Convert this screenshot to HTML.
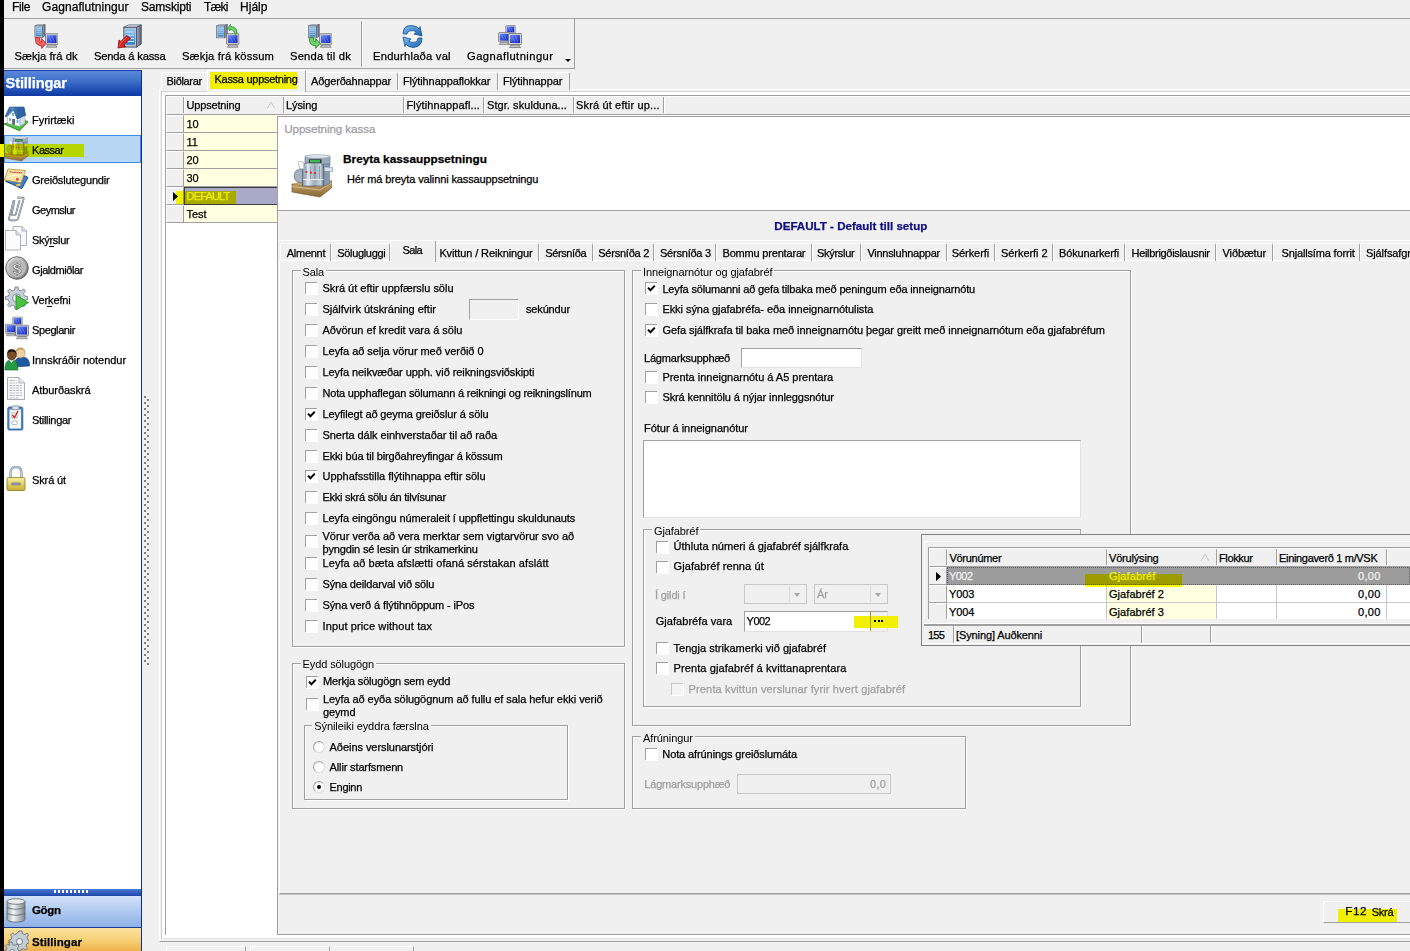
<!DOCTYPE html>
<html><head><meta charset="utf-8">
<style>
*{box-sizing:border-box}
html,body{margin:0;padding:0}
body{width:1410px;height:951px;overflow:hidden;position:relative;background:#f0f0f0;font-family:"Liberation Sans",sans-serif;font-size:11px;color:#000;letter-spacing:-0.1px}
.a{position:absolute}
.t{position:absolute;white-space:nowrap;-webkit-text-stroke:0.25px currentColor}
.cb{position:absolute;width:12px;height:12px;border-top:1px solid #a0a0a0;border-left:1px solid #a0a0a0;background:#fff;box-shadow:1px 1px 0 #fff}
.cb svg{position:absolute;left:0;top:0}
.cb.dis{border-color:#c8c8c8;background:#f4f4f4}
.rb{position:absolute;width:12px;height:12px;border:1px solid #dcdcdc;border-top-color:#a4a4a4;border-left-color:#a4a4a4;border-radius:50%;background:radial-gradient(circle at 60% 60%,#fff 40%,#ececec)}
.rb.on::after{content:"";position:absolute;left:3px;top:3px;width:4px;height:4px;border-radius:50%;background:#000}
.grp{position:absolute;border:1px solid #a0a0a0;box-shadow:1px 1px 0 #fff, inset 1px 1px 0 #fff}
.gt{position:absolute;background:#f0f0f0;padding:0 2px;white-space:nowrap}
.inp{position:absolute;background:#fff;border:1px solid #e2e2e2;border-top-color:#a0a0a0;border-left-color:#a0a0a0}
</style></head>
<body>

<svg width="0" height="0" style="position:absolute">
<defs>
<linearGradient id="gScr" x1="0" y1="0" x2="1" y2="1"><stop offset="0" stop-color="#6a8cff"/><stop offset="1" stop-color="#0a1cb8"/></linearGradient>
<linearGradient id="gSrvF" x1="0" y1="0" x2="0" y2="1"><stop offset="0" stop-color="#8ac4f0"/><stop offset="1" stop-color="#2f7cc8"/></linearGradient>
<linearGradient id="gSrvS" x1="0" y1="0" x2="1" y2="0"><stop offset="0" stop-color="#a0aab8"/><stop offset="1" stop-color="#56627a"/></linearGradient>
<linearGradient id="gCoin" x1="0" y1="0" x2="1" y2="1"><stop offset="0" stop-color="#f4f4f4"/><stop offset="0.45" stop-color="#b4b4b4"/><stop offset="1" stop-color="#6a6a6a"/></linearGradient>
<linearGradient id="gLock" x1="0" y1="0" x2="0" y2="1"><stop offset="0" stop-color="#f8f0a0"/><stop offset="1" stop-color="#c8b030"/></linearGradient>
<linearGradient id="gDb" x1="0" y1="0" x2="1" y2="0"><stop offset="0" stop-color="#9aa4ac"/><stop offset="0.35" stop-color="#f4f6f8"/><stop offset="1" stop-color="#7c868e"/></linearGradient>
<linearGradient id="gBlueArr" x1="0" y1="0" x2="1" y2="1"><stop offset="0" stop-color="#7cc0f0"/><stop offset="1" stop-color="#1a60b0"/></linearGradient>
<linearGradient id="gReg" x1="0" y1="0" x2="1" y2="0"><stop offset="0" stop-color="#c8ccd4"/><stop offset="0.4" stop-color="#f0f2f4"/><stop offset="1" stop-color="#6a7280"/></linearGradient>
<symbol id="srv" viewBox="0 0 12 15">
 <path d="M0.5 2 L3.5 0.5 L11.5 0.5 L8.5 2 Z" fill="#e4eaf0" stroke="#6a7484" stroke-width="0.6"/>
 <path d="M8.5 2 L11.5 0.5 L11.5 12.5 L8.5 14.5 Z" fill="url(#gSrvS)" stroke="#4a5468" stroke-width="0.6"/>
 <rect x="0.5" y="2" width="8" height="12.5" fill="#b8c4d0" stroke="#4a5468" stroke-width="0.6"/>
 <rect x="1.5" y="3" width="6" height="10" fill="url(#gSrvF)"/>
 <path d="M2 5h5M2 7h5M2 9h5M2 11h5" stroke="#d8ecfc" stroke-width="0.6"/>
</symbol>
<symbol id="mon" viewBox="0 0 14 15">
 <rect x="0.5" y="0.5" width="13" height="11" rx="1" fill="#d4d4d4" stroke="#6c6c6c" stroke-width="0.8"/>
 <rect x="2" y="2" width="10" height="8" fill="url(#gScr)"/>
 <path d="M4 3 L7 9 M7 3 L10 9" stroke="#8aa0ff" stroke-width="0.7" opacity="0.7"/>
 <path d="M3 12 L11 12 L12.5 14.5 L1.5 14.5 Z" fill="#c4c4c4" stroke="#6c6c6c" stroke-width="0.7"/>
</symbol>
<symbol id="regS" viewBox="0 0 24 24">
 <path d="M3 17 L12 21 L23 16 L23 19 L12 24 L3 20 Z" fill="#7a5a2a"/>
 <path d="M3 17 L14 12 L23 16 L12 21 Z" fill="#b08850"/>
 <rect x="5" y="6" width="15" height="11" rx="2" fill="url(#gReg)" stroke="#50565e" stroke-width="0.8"/>
 <rect x="8" y="1.5" width="10" height="5" fill="#9aa0a8" stroke="#50565e" stroke-width="0.8"/>
 <rect x="10" y="3" width="6" height="2" fill="#3a9a4a"/>
 <circle cx="9" cy="12" r="1" fill="#d03030"/><circle cx="12" cy="13" r="1" fill="#d03030"/><circle cx="15" cy="12" r="1" fill="#d03030"/>
 <path d="M20 9 h3 v3 h-3" fill="#d0d4d8" stroke="#50565e" stroke-width="0.6"/>
</symbol>
<symbol id="reg" viewBox="0 0 52 52"><defs><linearGradient id="gMetal" x1="0" y1="0" x2="1" y2="0"><stop offset="0" stop-color="#7e90a4"/><stop offset="0.25" stop-color="#e4eaf0"/><stop offset="0.55" stop-color="#9cacbc"/><stop offset="0.85" stop-color="#c8d2dc"/><stop offset="1" stop-color="#6c7c90"/></linearGradient><linearGradient id="gWood" x1="0" y1="0" x2="0" y2="1"><stop offset="0" stop-color="#c8a870"/><stop offset="1" stop-color="#8a6834"/></linearGradient></defs><path d="M6 34 L36 37 L45.5 30.5 L45.5 38 L34 47 L6 42 Z" fill="url(#gWood)" stroke="#6a4c20" stroke-width="0.6"/><path d="M6 36.5 L34 40 L45.5 33" fill="none" stroke="#e0c898" stroke-width="0.8"/><path d="M6 34 L16 31 L45.5 30.5 L36 37 Z" fill="#c8a468"/><rect x="19" y="6" width="25" height="10" rx="1" fill="#9aaabb" stroke="#5a6a7c" stroke-width="0.6"/><ellipse cx="31.5" cy="6.5" rx="12.5" ry="1.8" fill="#dfe6ec" stroke="#7a8a9c" stroke-width="0.5"/><rect x="23" y="9.3" width="12.5" height="3.8" fill="#2a3a30"/><rect x="24" y="10" width="10" height="2.5" fill="#3ab850"/><path d="M37.5 14 L43.5 14 L43.5 34 L37.5 36 Z" fill="#8a9aae" stroke="#5a6a7c" stroke-width="0.5"/><path d="M38 17 L46.5 17.5 L46.5 21.5 L38 21.5 Z" fill="#d8e0e8" stroke="#6a7a8c" stroke-width="0.5"/><path d="M16.5 36 L16.5 18 Q17 13 22 13 L33 13 Q37.5 13 37.8 18 L37.8 36 Z" fill="url(#gMetal)" stroke="#4e5e70" stroke-width="0.7"/><path d="M20 16 L20 29 M24.5 16 L24.5 29 M29 16 L29 29 M33.5 16 L33.5 29" stroke="#6a7a8e" stroke-width="0.6"/><path d="M17 29.5 L37.5 29.5" stroke="#eef2f6" stroke-width="1"/><circle cx="20.5" cy="22" r="1.1" fill="#d03a30"/><circle cx="25" cy="22.7" r="1.1" fill="#d03a30"/><circle cx="29" cy="23.2" r="1.1" fill="#d03a30"/><path d="M16.5 19 Q8 19 8.2 26 Q8.5 33 16.5 33 Z" fill="#a4b2c2" stroke="#4e5e70" stroke-width="0.6"/><path d="M12 12 Q14 10.5 17.5 12 L18 19 L13.5 18.5 Z" fill="#f4f6f8" stroke="#8a98a8" stroke-width="0.5"/></symbol>
<symbol id="mon3" viewBox="0 0 24 23">
 <use href="#mon" x="7" y="0" width="11" height="11"/>
 <use href="#mon" x="0" y="7" width="12" height="13"/>
 <use href="#mon" x="10" y="8" width="14" height="15"/>
</symbol>
</defs></svg>
<div class="a" style="left:0px;top:0px;width:4px;height:951px;background:#000"></div>
<div class="t" style="left:12px;top:0.84px;font-size:12px;line-height:12px;font-weight:400;color:#000;letter-spacing:-0.336px;">File</div>
<div class="t" style="left:42px;top:0.84px;font-size:12px;line-height:12px;font-weight:400;color:#000;letter-spacing:0.073px;">Gagnaflutningur</div>
<div class="t" style="left:141px;top:0.84px;font-size:12px;line-height:12px;font-weight:400;color:#000;letter-spacing:-0.191px;">Samskipti</div>
<div class="t" style="left:204px;top:0.84px;font-size:12px;line-height:12px;font-weight:400;color:#000;letter-spacing:-0.718px;">Tæki</div>
<div class="t" style="left:240px;top:0.84px;font-size:12px;line-height:12px;font-weight:400;color:#000;letter-spacing:0.028px;">Hjálp</div>
<div class="a" style="left:4px;top:18px;width:1406px;height:1px;background:#a0a0a0"></div>
<div class="a" style="left:4px;top:19px;width:571px;height:50px;border-right:1px solid #a0a0a0;border-bottom:1px solid #a0a0a0"></div>
<div class="a" style="left:361px;top:21px;width:1px;height:46px;background:#a0a0a0"></div>
<div class="a" style="left:362px;top:21px;width:1px;height:46px;background:#fff"></div>
<div class="t" style="left:14.5px;top:51.02px;font-size:11.2px;line-height:11.2px;font-weight:400;color:#000;letter-spacing:0.024px;">Sækja frá dk</div>
<div class="t" style="left:94px;top:51.02px;font-size:11.2px;line-height:11.2px;font-weight:400;color:#000;letter-spacing:-0.194px;">Senda á kassa</div>
<div class="t" style="left:182px;top:51.02px;font-size:11.2px;line-height:11.2px;font-weight:400;color:#000;letter-spacing:0.154px;">Sækja frá kössum</div>
<div class="t" style="left:290px;top:51.02px;font-size:11.2px;line-height:11.2px;font-weight:400;color:#000;letter-spacing:0.211px;">Senda til dk</div>
<div class="t" style="left:373px;top:51.02px;font-size:11.2px;line-height:11.2px;font-weight:400;color:#000;letter-spacing:0.226px;">Endurhlaða val</div>
<div class="t" style="left:467px;top:51.02px;font-size:11.2px;line-height:11.2px;font-weight:400;color:#000;letter-spacing:0.458px;">Gagnaflutningur</div>
<div class="a" style="left:565px;top:59px;width:0;height:0;border-left:3px solid transparent;border-right:3px solid transparent;border-top:3px solid #000"></div>
<div class="a" style="left:4px;top:70px;width:138px;height:26px;background:linear-gradient(#5a88da,#4274cc 35%,#2454b8 70%,#0d3aa2);border-top:1px solid #1a3ea8;border-right:1px solid #0c2c9a"></div>
<div class="t" style="left:5.5px;top:75.64px;font-size:14.6px;line-height:14.6px;font-weight:700;color:#fff;">Stillingar</div>
<div class="a" style="left:4px;top:96px;width:138px;height:793px;background:#fff;border-right:1px solid #0c2c9a"></div>
<div class="a" style="left:4px;top:135px;width:137px;height:28px;background:#b6d6f4;border:1px solid #3d8ee6"></div>
<div class="t" style="left:32px;top:114.69px;font-size:11px;line-height:11px;font-weight:400;color:#000;letter-spacing:-0.042px;">Fyrirtæki</div>
<div class="t" style="left:32px;top:144.69px;font-size:11px;line-height:11px;font-weight:400;color:#000;letter-spacing:-0.458px;">Kassar</div>
<div class="t" style="left:32px;top:174.69px;font-size:11px;line-height:11px;font-weight:400;color:#000;letter-spacing:-0.207px;">Greiðslutegundir</div>
<div class="t" style="left:32px;top:204.69px;font-size:11px;line-height:11px;font-weight:400;color:#000;letter-spacing:-0.508px;">Geymslur</div>
<div class="t" style="left:32px;top:234.69px;font-size:11px;line-height:11px;font-weight:400;color:#000;letter-spacing:-0.292px;">Skýrslur</div>
<div class="t" style="left:32px;top:264.69px;font-size:11px;line-height:11px;font-weight:400;color:#000;letter-spacing:-0.422px;">Gjaldmiðlar</div>
<div class="t" style="left:32px;top:294.69px;font-size:11px;line-height:11px;font-weight:400;color:#000;letter-spacing:-0.144px;">Verkefni</div>
<div class="t" style="left:32px;top:324.69px;font-size:11px;line-height:11px;font-weight:400;color:#000;letter-spacing:-0.398px;">Speglanir</div>
<div class="t" style="left:32px;top:354.69px;font-size:11px;line-height:11px;font-weight:400;color:#000;letter-spacing:-0.041px;">Innskráðir notendur</div>
<div class="t" style="left:32px;top:384.69px;font-size:11px;line-height:11px;font-weight:400;color:#000;letter-spacing:-0.074px;">Atburðaskrá</div>
<div class="t" style="left:32px;top:414.69px;font-size:11px;line-height:11px;font-weight:400;color:#000;letter-spacing:-0.299px;">Stillingar</div>
<div class="t" style="left:32px;top:474.69px;font-size:11px;line-height:11px;font-weight:400;color:#000;letter-spacing:-0.123px;">Skrá út</div>
<div class="a" style="left:49px;top:246px;width:5px;height:1px;background:#000"></div>
<div class="a" style="left:47px;top:306px;width:5px;height:1px;background:#000"></div>
<div class="a" style="left:144px;top:396px;width:2px;height:270px;background-image:linear-gradient(#808080 2px,transparent 2px);background-size:2px 6px"></div>
<div class="a" style="left:147px;top:399px;width:2px;height:267px;background-image:linear-gradient(#808080 2px,transparent 2px);background-size:2px 6px"></div>
<div class="a" style="left:4px;top:889px;width:138px;height:7px;background:linear-gradient(#4a78d4,#1c46a8);border-right:1px solid #0c2c9a"></div>
<div class="a" style="left:54px;top:890px;width:36px;height:3px;background-image:linear-gradient(90deg,#fff 2px,transparent 2px);background-size:4px 3px"></div>
<div class="a" style="left:4px;top:896px;width:138px;height:32px;background:linear-gradient(#d2e2f8,#a8c4ee 60%,#8eb0e6);border-right:1px solid #0c2c9a;border-bottom:1px solid #1a3a98"></div>
<div class="t" style="left:32px;top:905.27px;font-size:11.5px;line-height:11.5px;font-weight:700;color:#000;letter-spacing:-0.333px;">Gögn</div>
<div class="a" style="left:4px;top:928px;width:138px;height:23px;background:linear-gradient(#fbe39e,#f6cd70 60%,#efb04a);border-right:1px solid #0c2c9a"></div>
<div class="t" style="left:32px;top:937.27px;font-size:11.5px;line-height:11.5px;font-weight:700;color:#000;letter-spacing:0.080px;">Stillingar</div>
<div class="a" style="left:159px;top:89px;width:1251px;height:853px;border-top:1px solid #fff;border-left:1px solid #fff;border-bottom:1px solid #a0a0a0"></div>
<div class="a" style="left:161px;top:91px;width:1249px;height:848px;background:#fff;border-top:1px solid #d4d4d4;border-left:1px solid #d4d4d4;border-bottom:1px solid #e4e4e4"></div>
<div class="a" style="left:161px;top:72px;width:47px;height:18px;background:#f0f0f0;border-top:1px solid #fff;border-left:1px solid #fff;border-right:1px solid #a0a0a0;border-radius:2px 2px 0 0"></div>
<div class="a" style="left:306px;top:72px;width:92px;height:18px;background:#f0f0f0;border-top:1px solid #fff;border-left:1px solid #fff;border-right:1px solid #a0a0a0;border-radius:2px 2px 0 0"></div>
<div class="a" style="left:398px;top:72px;width:100px;height:18px;background:#f0f0f0;border-top:1px solid #fff;border-left:1px solid #fff;border-right:1px solid #a0a0a0;border-radius:2px 2px 0 0"></div>
<div class="a" style="left:498px;top:72px;width:72px;height:18px;background:#f0f0f0;border-top:1px solid #fff;border-left:1px solid #fff;border-right:1px solid #a0a0a0;border-radius:2px 2px 0 0"></div>
<div class="a" style="left:207px;top:70px;width:99px;height:22px;background:#f0f0f0;border-top:1px solid #fff;border-left:1px solid #fff;border-right:1px solid #a0a0a0;border-radius:2px 2px 0 0"></div>
<div class="a" style="left:210px;top:72px;width:87px;height:17px;background:#f0f000"></div>
<div class="t" style="left:166.5px;top:75.89px;font-size:11px;line-height:11px;font-weight:400;color:#000;letter-spacing:-0.326px;">Biðlarar</div>
<div class="t" style="left:214.5px;top:73.69px;font-size:11px;line-height:11px;font-weight:400;color:#000;letter-spacing:-0.278px;">Kassa uppsetning</div>
<div class="t" style="left:311px;top:75.89px;font-size:11px;line-height:11px;font-weight:400;color:#000;letter-spacing:-0.141px;">Aðgerðahnappar</div>
<div class="t" style="left:403px;top:75.89px;font-size:11px;line-height:11px;font-weight:400;color:#000;letter-spacing:-0.110px;">Flýtihnappaflokkar</div>
<div class="t" style="left:503px;top:75.89px;font-size:11px;line-height:11px;font-weight:400;color:#000;letter-spacing:-0.112px;">Flýtihnappar</div>
<div class="a" style="left:165px;top:95px;width:1245px;height:840px;background:#fff;border-left:1px solid #a0a0a0;border-top:1px solid #a0a0a0"></div>
<div class="a" style="left:166px;top:96px;width:1244px;height:19px;background:#f0f0f0;border-top:1px solid #fff;border-left:1px solid #fff;border-bottom:1px solid #a0a0a0"></div>
<div class="a" style="left:183px;top:97px;width:1px;height:16px;background:#a0a0a0"></div>
<div class="a" style="left:184px;top:97px;width:1px;height:16px;background:#fff"></div>
<div class="a" style="left:283px;top:97px;width:1px;height:16px;background:#a0a0a0"></div>
<div class="a" style="left:284px;top:97px;width:1px;height:16px;background:#fff"></div>
<div class="a" style="left:403px;top:97px;width:1px;height:16px;background:#a0a0a0"></div>
<div class="a" style="left:404px;top:97px;width:1px;height:16px;background:#fff"></div>
<div class="a" style="left:483px;top:97px;width:1px;height:16px;background:#a0a0a0"></div>
<div class="a" style="left:484px;top:97px;width:1px;height:16px;background:#fff"></div>
<div class="a" style="left:573px;top:97px;width:1px;height:16px;background:#a0a0a0"></div>
<div class="a" style="left:574px;top:97px;width:1px;height:16px;background:#fff"></div>
<div class="a" style="left:663px;top:97px;width:1px;height:16px;background:#a0a0a0"></div>
<div class="a" style="left:664px;top:97px;width:1px;height:16px;background:#fff"></div>
<div class="t" style="left:186.5px;top:100.49px;font-size:11px;line-height:11px;font-weight:400;color:#000;letter-spacing:-0.166px;">Uppsetning</div>
<svg class="a" style="left:266px;top:100px" width="10" height="10"><path d="M1 9 L5 2 L9 9" fill="none" stroke="#c8c8c8" stroke-width="1"/><path d="M1.5 9 H9" stroke="#fff"/></svg>
<div class="t" style="left:286px;top:100.49px;font-size:11px;line-height:11px;font-weight:400;color:#000;">Lýsing</div>
<div class="t" style="left:406.5px;top:100.49px;font-size:11px;line-height:11px;font-weight:400;color:#000;letter-spacing:0.122px;">Flýtihnappafl...</div>
<div class="t" style="left:487px;top:100.49px;font-size:11px;line-height:11px;font-weight:400;color:#000;letter-spacing:0.065px;">Stgr. skulduna...</div>
<div class="t" style="left:576px;top:100.49px;font-size:11px;line-height:11px;font-weight:400;color:#000;letter-spacing:0.152px;">Skrá út eftir up...</div>
<div class="a" style="left:166px;top:115px;width:18px;height:18px;background:#f0f0f0;border-top:1px solid #fff;border-left:1px solid #fff;border-bottom:1px solid #a0a0a0;border-right:1px solid #a0a0a0"></div>
<div class="a" style="left:184px;top:115px;width:94px;height:18px;background:#ffffe1;border-bottom:1px solid #a0a0a0"></div>
<div class="a" style="left:166px;top:133px;width:18px;height:18px;background:#f0f0f0;border-top:1px solid #fff;border-left:1px solid #fff;border-bottom:1px solid #a0a0a0;border-right:1px solid #a0a0a0"></div>
<div class="a" style="left:184px;top:133px;width:94px;height:18px;background:#ffffe1;border-bottom:1px solid #a0a0a0"></div>
<div class="a" style="left:166px;top:151px;width:18px;height:18px;background:#f0f0f0;border-top:1px solid #fff;border-left:1px solid #fff;border-bottom:1px solid #a0a0a0;border-right:1px solid #a0a0a0"></div>
<div class="a" style="left:184px;top:151px;width:94px;height:18px;background:#ffffe1;border-bottom:1px solid #a0a0a0"></div>
<div class="a" style="left:166px;top:169px;width:18px;height:18px;background:#f0f0f0;border-top:1px solid #fff;border-left:1px solid #fff;border-bottom:1px solid #a0a0a0;border-right:1px solid #a0a0a0"></div>
<div class="a" style="left:184px;top:169px;width:94px;height:18px;background:#ffffe1;border-bottom:1px solid #a0a0a0"></div>
<div class="a" style="left:166px;top:187px;width:18px;height:18px;background:#f0f0f0;border-top:1px solid #fff;border-left:1px solid #fff;border-bottom:1px solid #a0a0a0;border-right:1px solid #a0a0a0"></div>
<div class="a" style="left:184px;top:187px;width:94px;height:18px;background:#a8aac8;border:1px solid #3c3c3c;border-right:none"></div>
<div class="a" style="left:166px;top:205px;width:18px;height:18px;background:#f0f0f0;border-top:1px solid #fff;border-left:1px solid #fff;border-bottom:1px solid #a0a0a0;border-right:1px solid #a0a0a0"></div>
<div class="a" style="left:184px;top:205px;width:94px;height:18px;background:#ffffe1;border-bottom:1px solid #a0a0a0"></div>
<div class="t" style="left:186.5px;top:119.09px;font-size:11px;line-height:11px;font-weight:400;color:#000;">10</div>
<div class="t" style="left:186.5px;top:137.09px;font-size:11px;line-height:11px;font-weight:400;color:#000;">11</div>
<div class="t" style="left:186.5px;top:155.09px;font-size:11px;line-height:11px;font-weight:400;color:#000;">20</div>
<div class="t" style="left:186.5px;top:173.09px;font-size:11px;line-height:11px;font-weight:400;color:#000;">30</div>
<div class="t" style="left:186.5px;top:191.09px;font-size:11px;line-height:11px;font-weight:400;color:#f0f0f0;letter-spacing:-0.815px;">DEFAULT</div>
<div class="t" style="left:186.5px;top:209.09px;font-size:11px;line-height:11px;font-weight:400;color:#000;letter-spacing:-0.047px;">Test</div>
<svg class="a" style="left:172px;top:192px" width="8" height="10"><path d="M1 0 L6 4.5 L1 9 Z" fill="#000"/></svg>
<div class="a" style="left:176px;top:191px;width:60px;height:13px;background:#ffff00;mix-blend-mode:multiply"></div>
<div class="a" style="left:165px;top:222px;width:1px;height:712px;background:#a0a0a0"></div>
<div class="a" style="left:165px;top:222px;width:1px;height:712px;background:#a0a0a0"></div>
<div class="a" style="left:166px;top:946px;width:80px;height:5px;border-top:1px solid #fff;border-left:1px solid #fff;border-right:1px solid #a0a0a0"></div>
<div class="a" style="left:250px;top:946px;width:80px;height:5px;border-top:1px solid #fff;border-left:1px solid #fff;border-right:1px solid #a0a0a0"></div>
<div class="a" style="left:334px;top:946px;width:80px;height:5px;border-top:1px solid #fff;border-left:1px solid #fff;border-right:1px solid #a0a0a0"></div>
<div class="a" style="left:277px;top:116px;width:1133px;height:819px;background:#f0f0f0;border-left:1px solid #a0a0a0;border-top:1px solid #a0a0a0;border-bottom:1px solid #a0a0a0"></div>
<div class="a" style="left:278px;top:117px;width:1132px;height:94px;background:#fff;border-bottom:1px solid #a0a0a0"></div>
<div class="t" style="left:284.3px;top:122.98px;font-size:11.6px;line-height:11.6px;font-weight:400;color:#a09ca4;letter-spacing:-0.073px;">Uppsetning kassa</div>
<div class="t" style="left:343px;top:153.51px;font-size:11.8px;line-height:11.8px;font-weight:700;color:#000;letter-spacing:0.018px;">Breyta kassauppsetningu</div>
<div class="t" style="left:347px;top:174.49px;font-size:11px;line-height:11px;font-weight:400;color:#000;letter-spacing:-0.115px;">Hér má breyta valinni kassauppsetningu</div>
<div class="t" style="left:774.3px;top:220.18px;font-size:11.6px;line-height:11.6px;font-weight:700;color:#101080;letter-spacing:-0.003px;">DEFAULT - Default till setup</div>
<div class="a" style="left:279px;top:260px;width:1131px;height:634px;border-top:1px solid #fff;border-left:1px solid #fff;border-bottom:1px solid #a0a0a0"></div>
<div class="a" style="left:279px;top:894px;width:1131px;height:1px;background:#c4c4c4"></div>
<div class="a" style="left:280px;top:243px;width:51px;height:18px;border-top:1px solid #fff;border-left:1px solid #fff;border-right:1px solid #a0a0a0;border-radius:2px 2px 0 0"></div>
<div class="t" style="left:286.7px;top:247.69px;font-size:11px;line-height:11px;font-weight:400;color:#000;letter-spacing:-0.251px;">Almennt</div>
<div class="a" style="left:331px;top:243px;width:59px;height:18px;border-top:1px solid #fff;border-left:1px solid #fff;border-right:1px solid #a0a0a0;border-radius:2px 2px 0 0"></div>
<div class="t" style="left:337.3px;top:247.69px;font-size:11px;line-height:11px;font-weight:400;color:#000;letter-spacing:-0.338px;">Sölugluggi</div>
<div class="a" style="left:435px;top:243px;width:104px;height:18px;border-top:1px solid #fff;border-left:1px solid #fff;border-right:1px solid #a0a0a0;border-radius:2px 2px 0 0"></div>
<div class="t" style="left:439.4px;top:247.69px;font-size:11px;line-height:11px;font-weight:400;color:#000;letter-spacing:-0.110px;">Kvittun / Reikningur</div>
<div class="a" style="left:539px;top:243px;width:54px;height:18px;border-top:1px solid #fff;border-left:1px solid #fff;border-right:1px solid #a0a0a0;border-radius:2px 2px 0 0"></div>
<div class="t" style="left:545.3px;top:247.69px;font-size:11px;line-height:11px;font-weight:400;color:#000;letter-spacing:-0.404px;">Sérsníða</div>
<div class="a" style="left:593px;top:243px;width:61px;height:18px;border-top:1px solid #fff;border-left:1px solid #fff;border-right:1px solid #a0a0a0;border-radius:2px 2px 0 0"></div>
<div class="t" style="left:598.2px;top:247.69px;font-size:11px;line-height:11px;font-weight:400;color:#000;letter-spacing:-0.220px;">Sérsníða 2</div>
<div class="a" style="left:654px;top:243px;width:62px;height:18px;border-top:1px solid #fff;border-left:1px solid #fff;border-right:1px solid #a0a0a0;border-radius:2px 2px 0 0"></div>
<div class="t" style="left:660px;top:247.69px;font-size:11px;line-height:11px;font-weight:400;color:#000;letter-spacing:-0.220px;">Sérsníða 3</div>
<div class="a" style="left:716px;top:243px;width:96px;height:18px;border-top:1px solid #fff;border-left:1px solid #fff;border-right:1px solid #a0a0a0;border-radius:2px 2px 0 0"></div>
<div class="t" style="left:722.5px;top:247.69px;font-size:11px;line-height:11px;font-weight:400;color:#000;letter-spacing:-0.186px;">Bommu prentarar</div>
<div class="a" style="left:812px;top:243px;width:49px;height:18px;border-top:1px solid #fff;border-left:1px solid #fff;border-right:1px solid #a0a0a0;border-radius:2px 2px 0 0"></div>
<div class="t" style="left:817px;top:247.69px;font-size:11px;line-height:11px;font-weight:400;color:#000;letter-spacing:-0.292px;">Skýrslur</div>
<div class="a" style="left:861px;top:243px;width:86px;height:18px;border-top:1px solid #fff;border-left:1px solid #fff;border-right:1px solid #a0a0a0;border-radius:2px 2px 0 0"></div>
<div class="t" style="left:867.4px;top:247.69px;font-size:11px;line-height:11px;font-weight:400;color:#000;letter-spacing:-0.268px;">Vinnsluhnappar</div>
<div class="a" style="left:947px;top:243px;width:48px;height:18px;border-top:1px solid #fff;border-left:1px solid #fff;border-right:1px solid #a0a0a0;border-radius:2px 2px 0 0"></div>
<div class="t" style="left:951.8px;top:247.69px;font-size:11px;line-height:11px;font-weight:400;color:#000;letter-spacing:-0.076px;">Sérkerfi</div>
<div class="a" style="left:995px;top:243px;width:58px;height:18px;border-top:1px solid #fff;border-left:1px solid #fff;border-right:1px solid #a0a0a0;border-radius:2px 2px 0 0"></div>
<div class="t" style="left:1001px;top:247.69px;font-size:11px;line-height:11px;font-weight:400;color:#000;letter-spacing:-0.048px;">Sérkerfi 2</div>
<div class="a" style="left:1053px;top:243px;width:72px;height:18px;border-top:1px solid #fff;border-left:1px solid #fff;border-right:1px solid #a0a0a0;border-radius:2px 2px 0 0"></div>
<div class="t" style="left:1059px;top:247.69px;font-size:11px;line-height:11px;font-weight:400;color:#000;letter-spacing:-0.147px;">Bókunarkerfi</div>
<div class="a" style="left:1125px;top:243px;width:91px;height:18px;border-top:1px solid #fff;border-left:1px solid #fff;border-right:1px solid #a0a0a0;border-radius:2px 2px 0 0"></div>
<div class="t" style="left:1131.5px;top:247.69px;font-size:11px;line-height:11px;font-weight:400;color:#000;letter-spacing:-0.309px;">Heilbrigðislausnir</div>
<div class="a" style="left:1216px;top:243px;width:57px;height:18px;border-top:1px solid #fff;border-left:1px solid #fff;border-right:1px solid #a0a0a0;border-radius:2px 2px 0 0"></div>
<div class="t" style="left:1222.6px;top:247.69px;font-size:11px;line-height:11px;font-weight:400;color:#000;letter-spacing:-0.117px;">Viðbætur</div>
<div class="a" style="left:1273px;top:243px;width:87px;height:18px;border-top:1px solid #fff;border-left:1px solid #fff;border-right:1px solid #a0a0a0;border-radius:2px 2px 0 0"></div>
<div class="t" style="left:1281.6px;top:247.69px;font-size:11px;line-height:11px;font-weight:400;color:#000;letter-spacing:-0.165px;">Snjallsíma forrit</div>
<div class="a" style="left:1360px;top:243px;width:100px;height:18px;border-top:1px solid #fff;border-left:1px solid #fff;border-right:1px solid #a0a0a0;border-radius:2px 2px 0 0"></div>
<div class="t" style="left:1366px;top:247.69px;font-size:11px;line-height:11px;font-weight:400;color:#000;">Sjálfsafgreiðsla</div>
<div class="a" style="left:279px;top:240px;width:1131px;height:1px;background:#fff"></div>
<div class="a" style="left:390px;top:240px;width:46px;height:22px;background:#f0f0f0;border-top:1px solid #fff;border-left:1px solid #fff;border-right:1px solid #a0a0a0;border-radius:2px 2px 0 0"></div>
<div class="t" style="left:402.4px;top:245.19px;font-size:11px;line-height:11px;font-weight:400;color:#000;letter-spacing:-0.583px;">Sala</div>
<div class="a" style="left:1323px;top:901px;width:90px;height:22px;border-top:1px solid #fff;border-left:1px solid #fff;border-bottom:1px solid #a0a0a0"></div>
<div class="a" style="left:1338px;top:908.5px;width:59px;height:13px;background:#f0f000"></div>
<div class="t" style="left:1345.3px;top:906.41px;font-size:11.8px;line-height:11.8px;font-weight:400;color:#000;letter-spacing:0.457px;">F12</div>
<div class="t" style="left:1371.8px;top:906.89px;font-size:11px;line-height:11px;font-weight:400;color:#000;letter-spacing:-0.306px;">Skrá</div>
<div class="grp" style="left:292px;top:270px;width:333px;height:377px"></div>
<div class="gt" style="left:300.5px;top:266.69px;font-size:11px;line-height:11px">Sala</div>
<div class="cb" style="left:305px;top:282px"></div>
<div class="t" style="left:322.5px;top:282.69px;font-size:11px;line-height:11px;font-weight:400;color:#000;letter-spacing:-0.016px;">Skrá út eftir uppfærslu sölu</div>
<div class="cb" style="left:305px;top:303px"></div>
<div class="t" style="left:322.5px;top:303.69px;font-size:11px;line-height:11px;font-weight:400;color:#000;letter-spacing:-0.008px;">Sjálfvirk útskráning eftir</div>
<div class="cb" style="left:305px;top:324px"></div>
<div class="t" style="left:322.5px;top:324.69px;font-size:11px;line-height:11px;font-weight:400;color:#000;letter-spacing:-0.001px;">Aðvörun ef kredit vara á sölu</div>
<div class="cb" style="left:305px;top:345px"></div>
<div class="t" style="left:322.5px;top:345.69px;font-size:11px;line-height:11px;font-weight:400;color:#000;letter-spacing:-0.050px;">Leyfa að selja vörur með verðið 0</div>
<div class="cb" style="left:305px;top:366px"></div>
<div class="t" style="left:322.5px;top:366.69px;font-size:11px;line-height:11px;font-weight:400;color:#000;letter-spacing:-0.074px;">Leyfa neikvæðar upph. við reikningsviðskipti</div>
<div class="cb" style="left:305px;top:387px"></div>
<div class="t" style="left:322.5px;top:387.69px;font-size:11px;line-height:11px;font-weight:400;color:#000;letter-spacing:-0.201px;">Nota upphaflegan sölumann á reikningi og reikningslínum</div>
<div class="cb on" style="left:305px;top:408px"><svg width="11" height="11"><path d="M2 4.6 L4.4 7.2 L8.8 2.6" fill="none" stroke="#000" stroke-width="2"/></svg></div>
<div class="t" style="left:322.5px;top:408.69px;font-size:11px;line-height:11px;font-weight:400;color:#000;letter-spacing:-0.114px;">Leyfilegt að geyma greiðslur á sölu</div>
<div class="cb" style="left:305px;top:429px"></div>
<div class="t" style="left:322.5px;top:429.69px;font-size:11px;line-height:11px;font-weight:400;color:#000;letter-spacing:-0.060px;">Snerta dálk einhverstaðar til að raða</div>
<div class="cb" style="left:305px;top:450px"></div>
<div class="t" style="left:322.5px;top:450.69px;font-size:11px;line-height:11px;font-weight:400;color:#000;letter-spacing:-0.155px;">Ekki búa til birgðahreyfingar á kössum</div>
<div class="cb on" style="left:305px;top:470px"><svg width="11" height="11"><path d="M2 4.6 L4.4 7.2 L8.8 2.6" fill="none" stroke="#000" stroke-width="2"/></svg></div>
<div class="t" style="left:322.5px;top:470.69px;font-size:11px;line-height:11px;font-weight:400;color:#000;letter-spacing:-0.024px;">Upphafsstilla flýtihnappa eftir sölu</div>
<div class="cb" style="left:305px;top:491px"></div>
<div class="t" style="left:322.5px;top:491.69px;font-size:11px;line-height:11px;font-weight:400;color:#000;letter-spacing:-0.247px;">Ekki skrá sölu án tilvísunar</div>
<div class="cb" style="left:305px;top:512px"></div>
<div class="t" style="left:322.5px;top:512.69px;font-size:11px;line-height:11px;font-weight:400;color:#000;letter-spacing:-0.092px;">Leyfa eingöngu númeraleit í uppflettingu skuldunauts</div>
<div class="cb" style="left:305px;top:557px"></div>
<div class="t" style="left:322.5px;top:557.69px;font-size:11px;line-height:11px;font-weight:400;color:#000;letter-spacing:0.079px;">Leyfa að bæta afslætti ofaná sérstakan afslátt</div>
<div class="cb" style="left:305px;top:578px"></div>
<div class="t" style="left:322.5px;top:578.69px;font-size:11px;line-height:11px;font-weight:400;color:#000;letter-spacing:-0.157px;">Sýna deildarval við sölu</div>
<div class="cb" style="left:305px;top:599px"></div>
<div class="t" style="left:322.5px;top:599.69px;font-size:11px;line-height:11px;font-weight:400;color:#000;letter-spacing:-0.107px;">Sýna verð á flýtihnöppum - iPos</div>
<div class="cb" style="left:305px;top:620px"></div>
<div class="t" style="left:322.5px;top:620.69px;font-size:11px;line-height:11px;font-weight:400;color:#000;letter-spacing:0.117px;">Input price without tax</div>
<div class="cb" style="left:305px;top:535px"></div>
<div class="t" style="left:322.5px;top:530.69px;font-size:11px;line-height:11px;font-weight:400;color:#000;letter-spacing:-0.004px;">Vörur verða að vera merktar sem vigtarvörur svo að</div>
<div class="t" style="left:322.5px;top:543.69px;font-size:11px;line-height:11px;font-weight:400;color:#000;letter-spacing:-0.151px;">þyngdin sé lesin úr strikamerkinu</div>
<div class="inp" style="left:469px;top:299px;width:50px;height:21px;border-top:1px solid #a0a0a0;border-left:1px solid #a0a0a0;border-right:1px solid #fff;border-bottom:1px solid #fff;background:#f0f0f0"></div>
<div class="t" style="left:526px;top:303.69px;font-size:11px;line-height:11px;font-weight:400;color:#000;letter-spacing:-0.158px;">sekúndur</div>
<div class="grp" style="left:292px;top:663px;width:333px;height:146px"></div>
<div class="gt" style="left:300.5px;top:658.69px;font-size:11px;line-height:11px">Eydd sölugögn</div>
<div class="cb on" style="left:306px;top:676px"><svg width="11" height="11"><path d="M2 4.6 L4.4 7.2 L8.8 2.6" fill="none" stroke="#000" stroke-width="2"/></svg></div>
<div class="t" style="left:323px;top:675.69px;font-size:11px;line-height:11px;font-weight:400;color:#000;letter-spacing:-0.178px;">Merkja sölugögn sem eydd</div>
<div class="cb" style="left:306px;top:698px"></div>
<div class="t" style="left:323px;top:693.69px;font-size:11px;line-height:11px;font-weight:400;color:#000;letter-spacing:-0.071px;">Leyfa að eyða sölugögnum að fullu ef sala hefur ekki verið</div>
<div class="t" style="left:323px;top:706.69px;font-size:11px;line-height:11px;font-weight:400;color:#000;letter-spacing:-0.126px;">geymd</div>
<div class="grp" style="left:304px;top:725px;width:264px;height:75px"></div>
<div class="gt" style="left:312.3px;top:720.69px;font-size:11px;line-height:11px">Sýnileiki eyddra færslna</div>
<div class="rb" style="left:313px;top:740.5px"></div>
<div class="t" style="left:329.6px;top:741.69px;font-size:11px;line-height:11px;font-weight:400;color:#000;letter-spacing:-0.057px;">Aðeins verslunarstjóri</div>
<div class="rb" style="left:313px;top:760.5px"></div>
<div class="t" style="left:329.6px;top:761.69px;font-size:11px;line-height:11px;font-weight:400;color:#000;letter-spacing:-0.144px;">Allir starfsmenn</div>
<div class="rb on" style="left:313px;top:780.5px"></div>
<div class="t" style="left:329.6px;top:781.69px;font-size:11px;line-height:11px;font-weight:400;color:#000;letter-spacing:-0.311px;">Enginn</div>
<div class="grp" style="left:632px;top:270px;width:499px;height:456px"></div>
<div class="gt" style="left:641px;top:266.69px;font-size:11px;line-height:11px">Inneignarnótur og gjafabréf</div>
<div class="cb on" style="left:645px;top:282px"><svg width="11" height="11"><path d="M2 4.6 L4.4 7.2 L8.8 2.6" fill="none" stroke="#000" stroke-width="2"/></svg></div>
<div class="t" style="left:662.4px;top:283.69px;font-size:11px;line-height:11px;font-weight:400;color:#000;letter-spacing:-0.145px;">Leyfa sölumanni að gefa tilbaka með peningum eða inneignarnótu</div>
<div class="cb" style="left:645px;top:303px"></div>
<div class="t" style="left:662.4px;top:303.69px;font-size:11px;line-height:11px;font-weight:400;color:#000;letter-spacing:-0.055px;">Ekki sýna gjafabréfa- eða inneignarnótulista</div>
<div class="cb on" style="left:645px;top:324px"><svg width="11" height="11"><path d="M2 4.6 L4.4 7.2 L8.8 2.6" fill="none" stroke="#000" stroke-width="2"/></svg></div>
<div class="t" style="left:662.4px;top:324.69px;font-size:11px;line-height:11px;font-weight:400;color:#000;letter-spacing:-0.056px;">Gefa sjálfkrafa til baka með inneignarnótu þegar greitt með inneignarnótum eða gjafabréfum</div>
<div class="cb" style="left:645px;top:371px"></div>
<div class="t" style="left:662.4px;top:371.69px;font-size:11px;line-height:11px;font-weight:400;color:#000;letter-spacing:-0.013px;">Prenta inneignarnótu á A5 prentara</div>
<div class="cb" style="left:645px;top:391px"></div>
<div class="t" style="left:662.4px;top:391.69px;font-size:11px;line-height:11px;font-weight:400;color:#000;letter-spacing:-0.094px;">Skrá kennitölu á nýjar innleggsnótur</div>
<div class="t" style="left:644px;top:352.69px;font-size:11px;line-height:11px;font-weight:400;color:#000;letter-spacing:-0.191px;">Lágmarksupphæð</div>
<div class="inp" style="left:741px;top:348px;width:121px;height:20px"></div>
<div class="t" style="left:644px;top:422.69px;font-size:11px;line-height:11px;font-weight:400;color:#000;letter-spacing:-0.028px;">Fótur á inneignanótur</div>
<div class="inp" style="left:643px;top:440px;width:438px;height:78px"></div>
<div class="grp" style="left:643px;top:529px;width:438px;height:178px"></div>
<div class="gt" style="left:652px;top:525.69px;font-size:11px;line-height:11px">Gjafabréf</div>
<div class="cb" style="left:656px;top:541px"></div>
<div class="t" style="left:673.5px;top:541.19px;font-size:11px;line-height:11px;font-weight:400;color:#000;letter-spacing:0.031px;">Úthluta númeri á gjafabréf sjálfkrafa</div>
<div class="cb" style="left:656px;top:561px"></div>
<div class="t" style="left:673.5px;top:561.19px;font-size:11px;line-height:11px;font-weight:400;color:#000;letter-spacing:0.090px;">Gjafabréf renna út</div>
<div class="t" style="left:655px;top:589.69px;font-size:11px;line-height:11px;font-weight:400;color:#a0a0a0;letter-spacing:-0.144px;">Í gildi í</div>
<div class="inp" style="left:744px;top:584px;width:63px;height:20px;background:#f0f0f0;border-color:#c8c8c8"></div>
<div class="a" style="left:789px;top:586px;width:16px;height:16px;border-left:1px solid #d8d8d8"></div>
<div class="a" style="left:794px;top:593px;width:0;height:0;border-left:3.5px solid transparent;border-right:3.5px solid transparent;border-top:4px solid #a8a8a8"></div>
<div class="inp" style="left:814px;top:584px;width:74px;height:20px;background:#f0f0f0;border-color:#c8c8c8"></div>
<div class="a" style="left:870px;top:586px;width:16px;height:16px;border-left:1px solid #d8d8d8"></div>
<div class="a" style="left:875px;top:593px;width:0;height:0;border-left:3.5px solid transparent;border-right:3.5px solid transparent;border-top:4px solid #a8a8a8"></div>
<div class="t" style="left:817px;top:589.19px;font-size:11px;line-height:11px;font-weight:400;color:#a0a0a0;letter-spacing:0.000px;">Ár</div>
<div class="t" style="left:655.7px;top:615.69px;font-size:11px;line-height:11px;font-weight:400;color:#000;letter-spacing:0.051px;">Gjafabréfa vara</div>
<div class="inp" style="left:744px;top:611px;width:144px;height:21px"></div>
<div class="t" style="left:746.6px;top:615.69px;font-size:11px;line-height:11px;font-weight:400;color:#000;letter-spacing:-0.551px;">Y002</div>
<div class="a" style="left:870px;top:612px;width:17px;height:19px;background:#f0f0f0;border-left:1px solid #a0a0a0"></div>
<div class="a" style="left:853.5px;top:616px;width:44px;height:12px;background:#f0f000"></div>
<div class="a" style="left:870px;top:612px;width:17px;height:19px;border-left:1px solid #a0a000"></div>
<div class="a" style="left:874px;top:620px;width:2px;height:2px;background:#000"></div>
<div class="a" style="left:877.5px;top:620px;width:2px;height:2px;background:#000"></div>
<div class="a" style="left:881px;top:620px;width:2px;height:2px;background:#000"></div>
<div class="cb" style="left:656px;top:642px"></div>
<div class="t" style="left:673.5px;top:642.69px;font-size:11px;line-height:11px;font-weight:400;color:#000;letter-spacing:0.027px;">Tengja strikamerki við gjafabréf</div>
<div class="cb" style="left:656px;top:662px"></div>
<div class="t" style="left:673.5px;top:662.69px;font-size:11px;line-height:11px;font-weight:400;color:#000;letter-spacing:0.103px;">Prenta gjafabréf á kvittanaprentara</div>
<div class="cb dis" style="left:671px;top:683px"></div>
<div class="t" style="left:688.6px;top:683.69px;font-size:11px;line-height:11px;font-weight:400;color:#a0a0a0;letter-spacing:0.137px;">Prenta kvittun verslunar fyrir hvert gjafabréf</div>
<div class="grp" style="left:632px;top:736px;width:334px;height:73px"></div>
<div class="gt" style="left:641px;top:732.69px;font-size:11px;line-height:11px">Afrúningur</div>
<div class="cb" style="left:645px;top:748px"></div>
<div class="t" style="left:662.3px;top:748.69px;font-size:11px;line-height:11px;font-weight:400;color:#000;letter-spacing:-0.103px;">Nota afrúnings greiðslumáta</div>
<div class="t" style="left:644.3px;top:778.69px;font-size:11px;line-height:11px;font-weight:400;color:#a0a0a0;letter-spacing:-0.191px;">Lágmarksupphæð</div>
<div class="inp" style="left:737px;top:774px;width:154px;height:20px;background:#f0f0f0;border-color:#c8c8c8"></div>
<div class="t" style="left:870px;top:778.69px;font-size:11px;line-height:11px;font-weight:400;color:#a0a0a0;letter-spacing:0.301px;">0,0</div>
<div class="a" style="left:921px;top:534px;width:489px;height:112px;background:#f0f0f0;border:1px solid #808080;border-right:none"></div>
<div class="a" style="left:924px;top:541px;width:486px;height:81px;border-top:1px solid #fff;border-left:1px solid #fff;border-bottom:1px solid #fff"></div>
<div class="a" style="left:928px;top:547px;width:482px;height:72px;background:#fff;border-top:1px solid #a0a0a0;border-left:1px solid #a0a0a0"></div>
<div class="a" style="left:929px;top:548px;width:481px;height:19px;background:#f0f0f0;border-top:1px solid #fff;border-left:1px solid #fff;border-bottom:1px solid #a0a0a0"></div>
<div class="a" style="left:946px;top:549px;width:1px;height:16px;background:#a0a0a0"></div>
<div class="a" style="left:947px;top:549px;width:1px;height:16px;background:#fff"></div>
<div class="a" style="left:1106px;top:549px;width:1px;height:16px;background:#a0a0a0"></div>
<div class="a" style="left:1107px;top:549px;width:1px;height:16px;background:#fff"></div>
<div class="a" style="left:1216px;top:549px;width:1px;height:16px;background:#a0a0a0"></div>
<div class="a" style="left:1217px;top:549px;width:1px;height:16px;background:#fff"></div>
<div class="a" style="left:1276px;top:549px;width:1px;height:16px;background:#a0a0a0"></div>
<div class="a" style="left:1277px;top:549px;width:1px;height:16px;background:#fff"></div>
<div class="a" style="left:1386px;top:549px;width:1px;height:16px;background:#a0a0a0"></div>
<div class="a" style="left:1387px;top:549px;width:1px;height:16px;background:#fff"></div>
<div class="t" style="left:949.5px;top:553.09px;font-size:11px;line-height:11px;font-weight:400;color:#000;letter-spacing:-0.291px;">Vörunúmer</div>
<div class="t" style="left:1109px;top:553.09px;font-size:11px;line-height:11px;font-weight:400;color:#000;letter-spacing:-0.186px;">Vörulýsing</div>
<div class="t" style="left:1219px;top:553.09px;font-size:11px;line-height:11px;font-weight:400;color:#000;letter-spacing:-0.352px;">Flokkur</div>
<div class="t" style="left:1279px;top:553.09px;font-size:11px;line-height:11px;font-weight:400;color:#000;letter-spacing:-0.324px;">Einingaverð 1 m/VSK</div>
<svg class="a" style="left:1200px;top:552px" width="10" height="10"><path d="M1 9 L5 2 L9 9" fill="none" stroke="#c8c8c8" stroke-width="1"/></svg>
<div class="a" style="left:929px;top:567px;width:18px;height:18px;background:#f0f0f0;border-top:1px solid #fff;border-bottom:1px solid #a0a0a0;border-right:1px solid #a0a0a0"></div>
<div class="a" style="left:947px;top:567px;width:463px;height:18px;background:#9c9c9c;outline:1px dotted #606060;outline-offset:-1px"></div>
<div class="t" style="left:949px;top:571.09px;font-size:11px;line-height:11px;font-weight:400;color:#f0f0f0;letter-spacing:-0.551px;">Y002</div>
<div class="t" style="left:1109px;top:571.09px;font-size:11px;line-height:11px;font-weight:400;color:#f0f000;letter-spacing:0.128px;">Gjafabréf</div>
<div class="t" style="left:1358px;top:571.09px;font-size:11px;line-height:11px;font-weight:400;color:#f0f0f0;letter-spacing:0.345px;">0,00</div>
<div class="a" style="left:929px;top:585px;width:18px;height:18px;background:#f0f0f0;border-top:1px solid #fff;border-bottom:1px solid #a0a0a0;border-right:1px solid #a0a0a0"></div>
<div class="a" style="left:947px;top:585px;width:463px;height:18px;background:#fff;border-bottom:1px solid #c8c8c8"></div>
<div class="a" style="left:1107px;top:585px;width:109px;height:17px;background:#ffffe1"></div>
<div class="a" style="left:1106px;top:585px;width:1px;height:18px;background:#c8c8c8"></div>
<div class="a" style="left:1216px;top:585px;width:1px;height:18px;background:#c8c8c8"></div>
<div class="a" style="left:1276px;top:585px;width:1px;height:18px;background:#c8c8c8"></div>
<div class="a" style="left:1386px;top:585px;width:1px;height:18px;background:#c8c8c8"></div>
<div class="t" style="left:949px;top:589.09px;font-size:11px;line-height:11px;font-weight:400;color:#000;">Y003</div>
<div class="t" style="left:1109px;top:589.09px;font-size:11px;line-height:11px;font-weight:400;color:#000;letter-spacing:0.053px;">Gjafabréf 2</div>
<div class="t" style="left:1358px;top:589.09px;font-size:11px;line-height:11px;font-weight:400;color:#000;letter-spacing:0.345px;">0,00</div>
<div class="a" style="left:929px;top:603px;width:18px;height:16px;background:#f0f0f0;border-top:1px solid #fff;border-right:1px solid #a0a0a0"></div>
<div class="a" style="left:947px;top:603px;width:463px;height:16px;background:#fff"></div>
<div class="a" style="left:1107px;top:603px;width:109px;height:16px;background:#ffffe1"></div>
<div class="a" style="left:1106px;top:603px;width:1px;height:16px;background:#c8c8c8"></div>
<div class="a" style="left:1216px;top:603px;width:1px;height:16px;background:#c8c8c8"></div>
<div class="a" style="left:1276px;top:603px;width:1px;height:16px;background:#c8c8c8"></div>
<div class="a" style="left:1386px;top:603px;width:1px;height:16px;background:#c8c8c8"></div>
<div class="t" style="left:949px;top:607.09px;font-size:11px;line-height:11px;font-weight:400;color:#000;">Y004</div>
<div class="t" style="left:1109px;top:607.09px;font-size:11px;line-height:11px;font-weight:400;color:#000;letter-spacing:0.053px;">Gjafabréf 3</div>
<div class="t" style="left:1358px;top:607.09px;font-size:11px;line-height:11px;font-weight:400;color:#000;letter-spacing:0.345px;">0,00</div>
<svg class="a" style="left:935px;top:572px" width="8" height="10"><path d="M1 0 L6 4.5 L1 9 Z" fill="#000"/></svg>
<div class="a" style="left:1085px;top:574px;width:97px;height:13px;background:#ffff00;mix-blend-mode:multiply"></div>
<div class="a" style="left:924px;top:619px;width:486px;height:5px;background:#f0f0f0;border-bottom:1px solid #fff"></div>
<div class="a" style="left:924px;top:624px;width:486px;height:20px;background:#f0f0f0;border-top:2px solid #a0a0a0;border-bottom:1px solid #fff"></div>
<div class="a" style="left:953px;top:626px;width:1px;height:17px;background:#a0a0a0"></div>
<div class="a" style="left:954px;top:626px;width:1px;height:17px;background:#fff"></div>
<div class="a" style="left:1141px;top:626px;width:1px;height:17px;background:#a0a0a0"></div>
<div class="a" style="left:1142px;top:626px;width:1px;height:17px;background:#fff"></div>
<div class="a" style="left:1210px;top:626px;width:1px;height:17px;background:#a0a0a0"></div>
<div class="a" style="left:1211px;top:626px;width:1px;height:17px;background:#fff"></div>
<div class="t" style="left:928px;top:629.89px;font-size:11px;line-height:11px;font-weight:400;color:#000;letter-spacing:-0.786px;">155</div>
<div class="t" style="left:956.1px;top:629.89px;font-size:11px;line-height:11px;font-weight:400;color:#000;letter-spacing:-0.122px;">[Syning] Auðkenni</div>
<svg class="a" style="left:34px;top:24px" width="12" height="14"><use href="#srv" width="12" height="14"/></svg>
<svg class="a" style="left:44.5px;top:33px" width="13.5" height="15"><use href="#mon" width="13.5" height="15"/></svg>
<svg class="a" style="left:35px;top:36.5px" width="11.5" height="12" viewBox="0 0 11.5 12"><path d="M0.6 0.6 L4.6 0.6 L4.6 3 Q4.6 5 6.6 5 L6.6 1.6 L11 6.5 L6.6 11.4 L6.6 8.6 Q0.6 8.6 0.6 3 Z" fill="#f26262" stroke="#c42222" stroke-width="0.9"/></svg>
<svg class="a" style="left:122.5px;top:24px" width="19" height="24"><use href="#srv" width="19" height="24"/></svg>
<svg class="a" style="left:117px;top:34.5px" width="15" height="14" viewBox="0 0 15 14"><path d="M1 13 L2 5 L3.9 6.4 L9.8 0.6 L13.6 3.4 L7 9.6 L8.6 11.8 Z" fill="#d42424" stroke="#8e1010" stroke-width="0.8"/><path d="M2.5 11 L4 7.5 L10 2" stroke="#f07070" stroke-width="0.8" fill="none"/></svg>
<svg class="a" style="left:216px;top:24px" width="12" height="14.5"><use href="#srv" width="12" height="14.5"/></svg>
<svg class="a" style="left:226.3px;top:33px" width="13.5" height="15"><use href="#mon" width="13.5" height="15"/></svg>
<svg class="a" style="left:227px;top:23.5px" width="11" height="12" viewBox="0 0 11 12"><path d="M3.5 0.5 L0.5 4 L3 7 L3 5.5 Q7 5 8 10.5 L10 9.5 Q10 2 4 2.8 Z" fill="#6ad060" stroke="#2a8a2a" stroke-width="0.7"/></svg>
<svg class="a" style="left:308px;top:24px" width="12" height="14.5"><use href="#srv" width="12" height="14.5"/></svg>
<svg class="a" style="left:318.6px;top:33px" width="13.5" height="15"><use href="#mon" width="13.5" height="15"/></svg>
<svg class="a" style="left:309px;top:36.5px" width="11.5" height="12" viewBox="0 0 11.5 12"><path d="M0.6 0.6 L4.6 0.6 L4.6 3 Q4.6 5 6.6 5 L6.6 1.6 L11 6.5 L6.6 11.4 L6.6 8.6 Q0.6 8.6 0.6 3 Z" fill="#70d468" stroke="#2a8a2a" stroke-width="0.9"/></svg>
<svg class="a" style="left:400.5px;top:23.5px" width="23" height="25" viewBox="0 0 23 25"><path d="M2 10 Q2 1 11 1.5 Q16 2 18.5 5 L19 2.5 L21 12 L13 10 L15.5 8 Q12 5.5 8.5 7 Q6 8 6 10 Z" fill="url(#gBlueArr)" stroke="#155090" stroke-width="0.8"/><path d="M21 14 Q21 23 12 23.5 Q7 23 4.5 20 L4 22.5 L2 13 L10 15 L7.5 17 Q11 19.5 14.5 18 Q17 17 17 14 Z" fill="url(#gBlueArr)" stroke="#155090" stroke-width="0.8"/><path d="M6 12 L9 10 L12 12 L9 14 Z M12 13 L15 11 L18 13 L15 15Z" fill="#fff" opacity="0.9"/></svg>
<svg class="a" style="left:498px;top:25px" width="24" height="23"><use href="#mon3" width="24" height="23"/></svg>
<svg class="a" style="left:2px;top:104px" width="30" height="30" viewBox="0 0 30 30"><path d="M2 20 L17.5 26.8 L26 17.8 L22 16 L8 18 Z" fill="#4cc040" stroke="#1e7a1e" stroke-width="0.8"/><path d="M5.5 12.5 L5.5 19.5 L18 22.5 L18 14.5 L11.5 6 Z" fill="#fafcfe" stroke="#9aa4b0" stroke-width="0.5"/><path d="M18 14.5 L18 22.5 L23 19 L23 11 Z" fill="#d4dce6" stroke="#8a96a4" stroke-width="0.5"/><path d="M3 12.8 L7.5 3 L22 3 L23.8 11.8 L22.5 10.8 L15.2 15.2 L11.5 6 L4.5 12.8 Z" fill="#3a70b0" stroke="#1f4f8a" stroke-width="0.6"/><path d="M14.5 5 L22 3.2 L23.5 11.5 L15.5 15 Z" fill="#2f62a4"/><path d="M8 4 L12 4 L6 12" stroke="#7aa8d8" stroke-width="0.8" fill="none"/><rect x="10.2" y="15" width="2.8" height="5.8" fill="#5a6470"/><rect x="10" y="9" width="2" height="3" fill="#7aaee0"/><rect x="7" y="14" width="2" height="3" fill="#7aaee0"/><rect x="14.5" y="16" width="2" height="3" fill="#7aaee0"/></svg>
<svg class="a" style="left:1.5px;top:134px" width="30" height="30"><use href="#reg" width="30" height="30"/></svg>
<svg class="a" style="left:2px;top:164px" width="30" height="30" viewBox="0 0 30 30"><path d="M3.5 17.2 L23 11.8 L26 13.5 L19.8 24.6 Z" fill="#3c7cc8" stroke="#1a3e74" stroke-width="0.9"/><path d="M14.5 20.3 L19 19.5 L18.3 21.6 L14 22.2 Z" fill="#f0d040"/><path d="M6 5 L23.5 6.5 L19 18.8 L2.3 16 Z" fill="#f2e6a6" stroke="#b89838" stroke-width="0.9"/><path d="M5 14.5 Q11 9 18.5 12" stroke="#fbf4d0" stroke-width="1.5" fill="none"/><path d="M7.5 7.8 Q14 8.6 20.5 8.8" stroke="#c84040" stroke-width="1.1" fill="none" stroke-dasharray="1.5 0.4"/><circle cx="15.3" cy="15.3" r="1.5" fill="#e84848"/></svg>
<svg class="a" style="left:2px;top:194px" width="30" height="30" viewBox="0 0 30 30"><path d="M15 3.6 L20.8 3.6 Q22 3.8 21.6 5.2 L16 24.8 Q15.4 26.4 13.8 26.4 L8.6 26.4 Q6.6 26.2 7 24.4 L11.4 7.2 Q11.8 6.6 12.4 7.2 L9.6 20.2 Q9.6 21 10.4 21 L13 21 Q13.6 21 13.8 20.2 L17.6 6" fill="none" stroke="#5e6c7a" stroke-width="1.7" stroke-linejoin="round"/><path d="M15 3.6 L20.8 3.6 Q22 3.8 21.6 5.2 L16 24.8 Q15.4 26.4 13.8 26.4 L8.6 26.4 Q6.6 26.2 7 24.4 L11.4 7.2 Q11.8 6.6 12.4 7.2 L9.6 20.2 Q9.6 21 10.4 21 L13 21 Q13.6 21 13.8 20.2 L17.6 6" fill="none" stroke="#e4eef4" stroke-width="0.6" stroke-linejoin="round"/></svg>
<svg class="a" style="left:5px;top:226px" width="22" height="25" viewBox="0 0 22 25"><path d="M8 0.5 L17 0.5 L21.5 5 L21.5 19.5 L8 19.5 Z" fill="#f8f8f8" stroke="#9aa0a8" stroke-width="0.8"/><path d="M17 0.5 L17 5 L21.5 5" fill="#dde" stroke="#9aa0a8" stroke-width="0.7"/><path d="M0.5 4.5 L11 4.5 L15.5 9 L15.5 24 L0.5 24 Z" fill="#fcfcfc" stroke="#9aa0a8" stroke-width="0.8"/><path d="M11 4.5 L11 9 L15.5 9" fill="#dde" stroke="#9aa0a8" stroke-width="0.7"/></svg>
<svg class="a" style="left:5px;top:256px" width="24" height="24" viewBox="0 0 24 24"><circle cx="12" cy="12" r="11.3" fill="url(#gCoin)" stroke="#505050" stroke-width="0.8"/><circle cx="12" cy="12" r="8.5" fill="none" stroke="#d8d8d8" stroke-width="0.8"/><circle cx="12" cy="12" r="8.5" fill="#b8b8b8"/><text x="12" y="17.5" text-anchor="middle" font-family="Liberation Sans" font-weight="bold" font-size="15" fill="#f0f0f0" stroke="#6a6a6a" stroke-width="0.6">$</text></svg>
<svg class="a" style="left:5px;top:286px" width="24" height="24" viewBox="0 0 24 24"><path d="M10 1 L13 1 L13.5 4 L16 5 L18.5 3 L20.5 5 L18.5 7.5 L19.5 10 L22.5 10.5 L22.5 13.5 L19.5 14 L18.5 16.5 L20.5 19 L18.5 21 L16 19 L13.5 20 L13 23 L10 23 L9.5 20 L7 19 L4.5 21 L2.5 19 L4.5 16.5 L3.5 14 L0.5 13.5 L0.5 10.5 L3.5 10 L4.5 7.5 L2.5 5 L4.5 3 L7 5 L9.5 4 Z" fill="#c8d0d8" stroke="#6a7888" stroke-width="0.8"/><circle cx="11.5" cy="12" r="4" fill="#f0f4f8" stroke="#6a7888" stroke-width="0.8"/><path d="M11 9 L23.5 16.5 L11 24 Z" fill="#4cc040" stroke="#1e8a1e" stroke-width="0.8"/></svg>
<svg class="a" style="left:5px;top:316px" width="24" height="24"><use href="#mon3" width="24" height="24"/></svg>
<svg class="a" style="left:4px;top:346px" width="26" height="25" viewBox="0 0 26 25"><path d="M10 21 Q10 11 18 11 Q25.5 11 25.5 19 L25.5 20 L10 21 Z" fill="#1f5a9e" stroke="#123a6a" stroke-width="0.6"/><ellipse cx="16.5" cy="7" rx="4.6" ry="5" fill="#f2d2a4" stroke="#9a7a50" stroke-width="0.5"/><path d="M11.8 6 Q12 1.5 16.5 1.6 Q21 1.7 21.2 6 Q19.5 3.6 16.5 3.8 Q13.5 4 11.8 6Z" fill="#c8a870"/><path d="M0.8 24 Q0.8 13.5 7.5 13.5 Q14 13.5 14 24 Z" fill="#249a44" stroke="#146a2a" stroke-width="0.6"/><path d="M5 13.8 L7.5 17 L10 13.8 Z" fill="#f0f0f0"/><ellipse cx="7.8" cy="9" rx="4.6" ry="5" fill="#7a4c28" stroke="#3a2010" stroke-width="0.5"/><path d="M3.2 8 Q3 3 7.8 3.2 Q12.6 3.4 12.4 8 Q11 5.5 7.8 5.6 Q4.6 5.7 3.2 8Z" fill="#1a1410"/></svg>
<svg class="a" style="left:7px;top:377px" width="18" height="23" viewBox="0 0 18 23"><path d="M0.5 0.5 L12 0.5 L17.5 6 L17.5 22.5 L0.5 22.5 Z" fill="#fcfcfc" stroke="#9098a0" stroke-width="0.8"/><path d="M12 0.5 L12 6 L17.5 6" fill="#e4e8ec" stroke="#9098a0" stroke-width="0.7"/><path d="M2.5 3.5h7M2.5 6h8M2.5 8.5h12.5M2.5 11h12.5M2.5 13.5h12.5M2.5 16h12.5M2.5 18.5h12.5M2.5 21h9" stroke="#a4acb8" stroke-width="0.9" stroke-dasharray="3 0.8 2 0.8"/></svg>
<svg class="a" style="left:7px;top:405px" width="17" height="26" viewBox="0 0 17 26"><rect x="0.8" y="2" width="15" height="23" rx="1.5" fill="#4a86d0" stroke="#24548e" stroke-width="0.8"/><rect x="2.5" y="4.5" width="11.5" height="19" fill="#f4f6f8"/><rect x="5" y="0.8" width="7" height="4" rx="1" fill="#d8dce0" stroke="#6a7080" stroke-width="0.6"/><rect x="5" y="8" width="5" height="5" fill="#fff" stroke="#8a9098" stroke-width="0.6"/><path d="M5.5 10 L7.5 12.5 L11 6" fill="none" stroke="#d02020" stroke-width="1.3"/><rect x="5" y="16" width="5" height="3.5" rx="1" fill="#fff" stroke="#8a9098" stroke-width="0.6"/></svg>
<svg class="a" style="left:6px;top:466px" width="20" height="25" viewBox="0 0 20 25"><path d="M4.5 12 L4.5 7 Q4.5 1 10 1 Q15.5 1 15.5 7 L15.5 12" fill="none" stroke="#8a9aa8" stroke-width="2.4"/><path d="M4.5 12 L4.5 7 Q4.5 1 10 1 Q15.5 1 15.5 7 L15.5 12" fill="none" stroke="#d4dde4" stroke-width="0.8"/><rect x="1" y="11.5" width="18" height="13" rx="1.5" fill="url(#gLock)" stroke="#8a7a20" stroke-width="0.8"/><rect x="5" y="16.5" width="10" height="3" rx="1.5" fill="#8a9098"/></svg>
<svg class="a" style="left:6px;top:898px" width="20" height="25" viewBox="0 0 20 25"><path d="M1 3.5 L1 21 Q1 24 10 24 Q19 24 19 21 L19 3.5 Z" fill="url(#gDb)" stroke="#5a646c" stroke-width="0.8"/><ellipse cx="10" cy="3.5" rx="9" ry="2.8" fill="#e8ecef" stroke="#5a646c" stroke-width="0.8"/><path d="M1 9.5 Q10 13 19 9.5 M1 15.5 Q10 19 19 15.5" fill="none" stroke="#5a646c" stroke-width="0.8"/></svg>
<svg class="a" style="left:3px;top:929px" width="26" height="27" viewBox="0 0 26 27"><g fill="#c4ccd4" stroke="#5c6874" stroke-width="0.8"><path d="M16 2 L19 2 L19.5 4.5 L22 5.5 L24 4 L25.5 6 L24 8 L24.5 10.5 L26 11 L26 14 L24 14.5 L23 17 L24.5 19 L22.5 21 L20.5 19.5 L18 20.5 L17.5 23 L14.5 23 L14 20.5 L11.5 19.5 L9.5 21 L7.5 19 L9 17 L8 14.5 L6 14 L6 11 L8 10.5 L9 8 L7.5 6 L9.5 4 L11.5 5.5 L14 4.5 Z"/><circle cx="16.5" cy="12.5" r="3" fill="#f0f4f8"/><path d="M6 13 L9 13 L9.5 15.5 L12 16.5 L14 15 L16 17 L14.5 19 L15.5 21.5 L18 22 L18 25 L15.5 25.5 L14.5 28 L4 28 L3 25.5 L0.5 25 L0.5 22 L3 21.5 L4 19 L2.5 17 L4.5 15 L6.5 16.5 Z"/><circle cx="9.3" cy="23" r="2.6" fill="#f0f4f8"/></g></svg>
<svg class="a" style="left:286px;top:150px" width="52" height="52"><use href="#reg" width="52" height="52"/></svg>
<div class="a" style="left:0px;top:144px;width:84px;height:13px;background:#ffff00;mix-blend-mode:multiply"></div>
<div class="a" style="left:0px;top:144px;width:4px;height:13px;background:#f0f000"></div>
</body></html>
